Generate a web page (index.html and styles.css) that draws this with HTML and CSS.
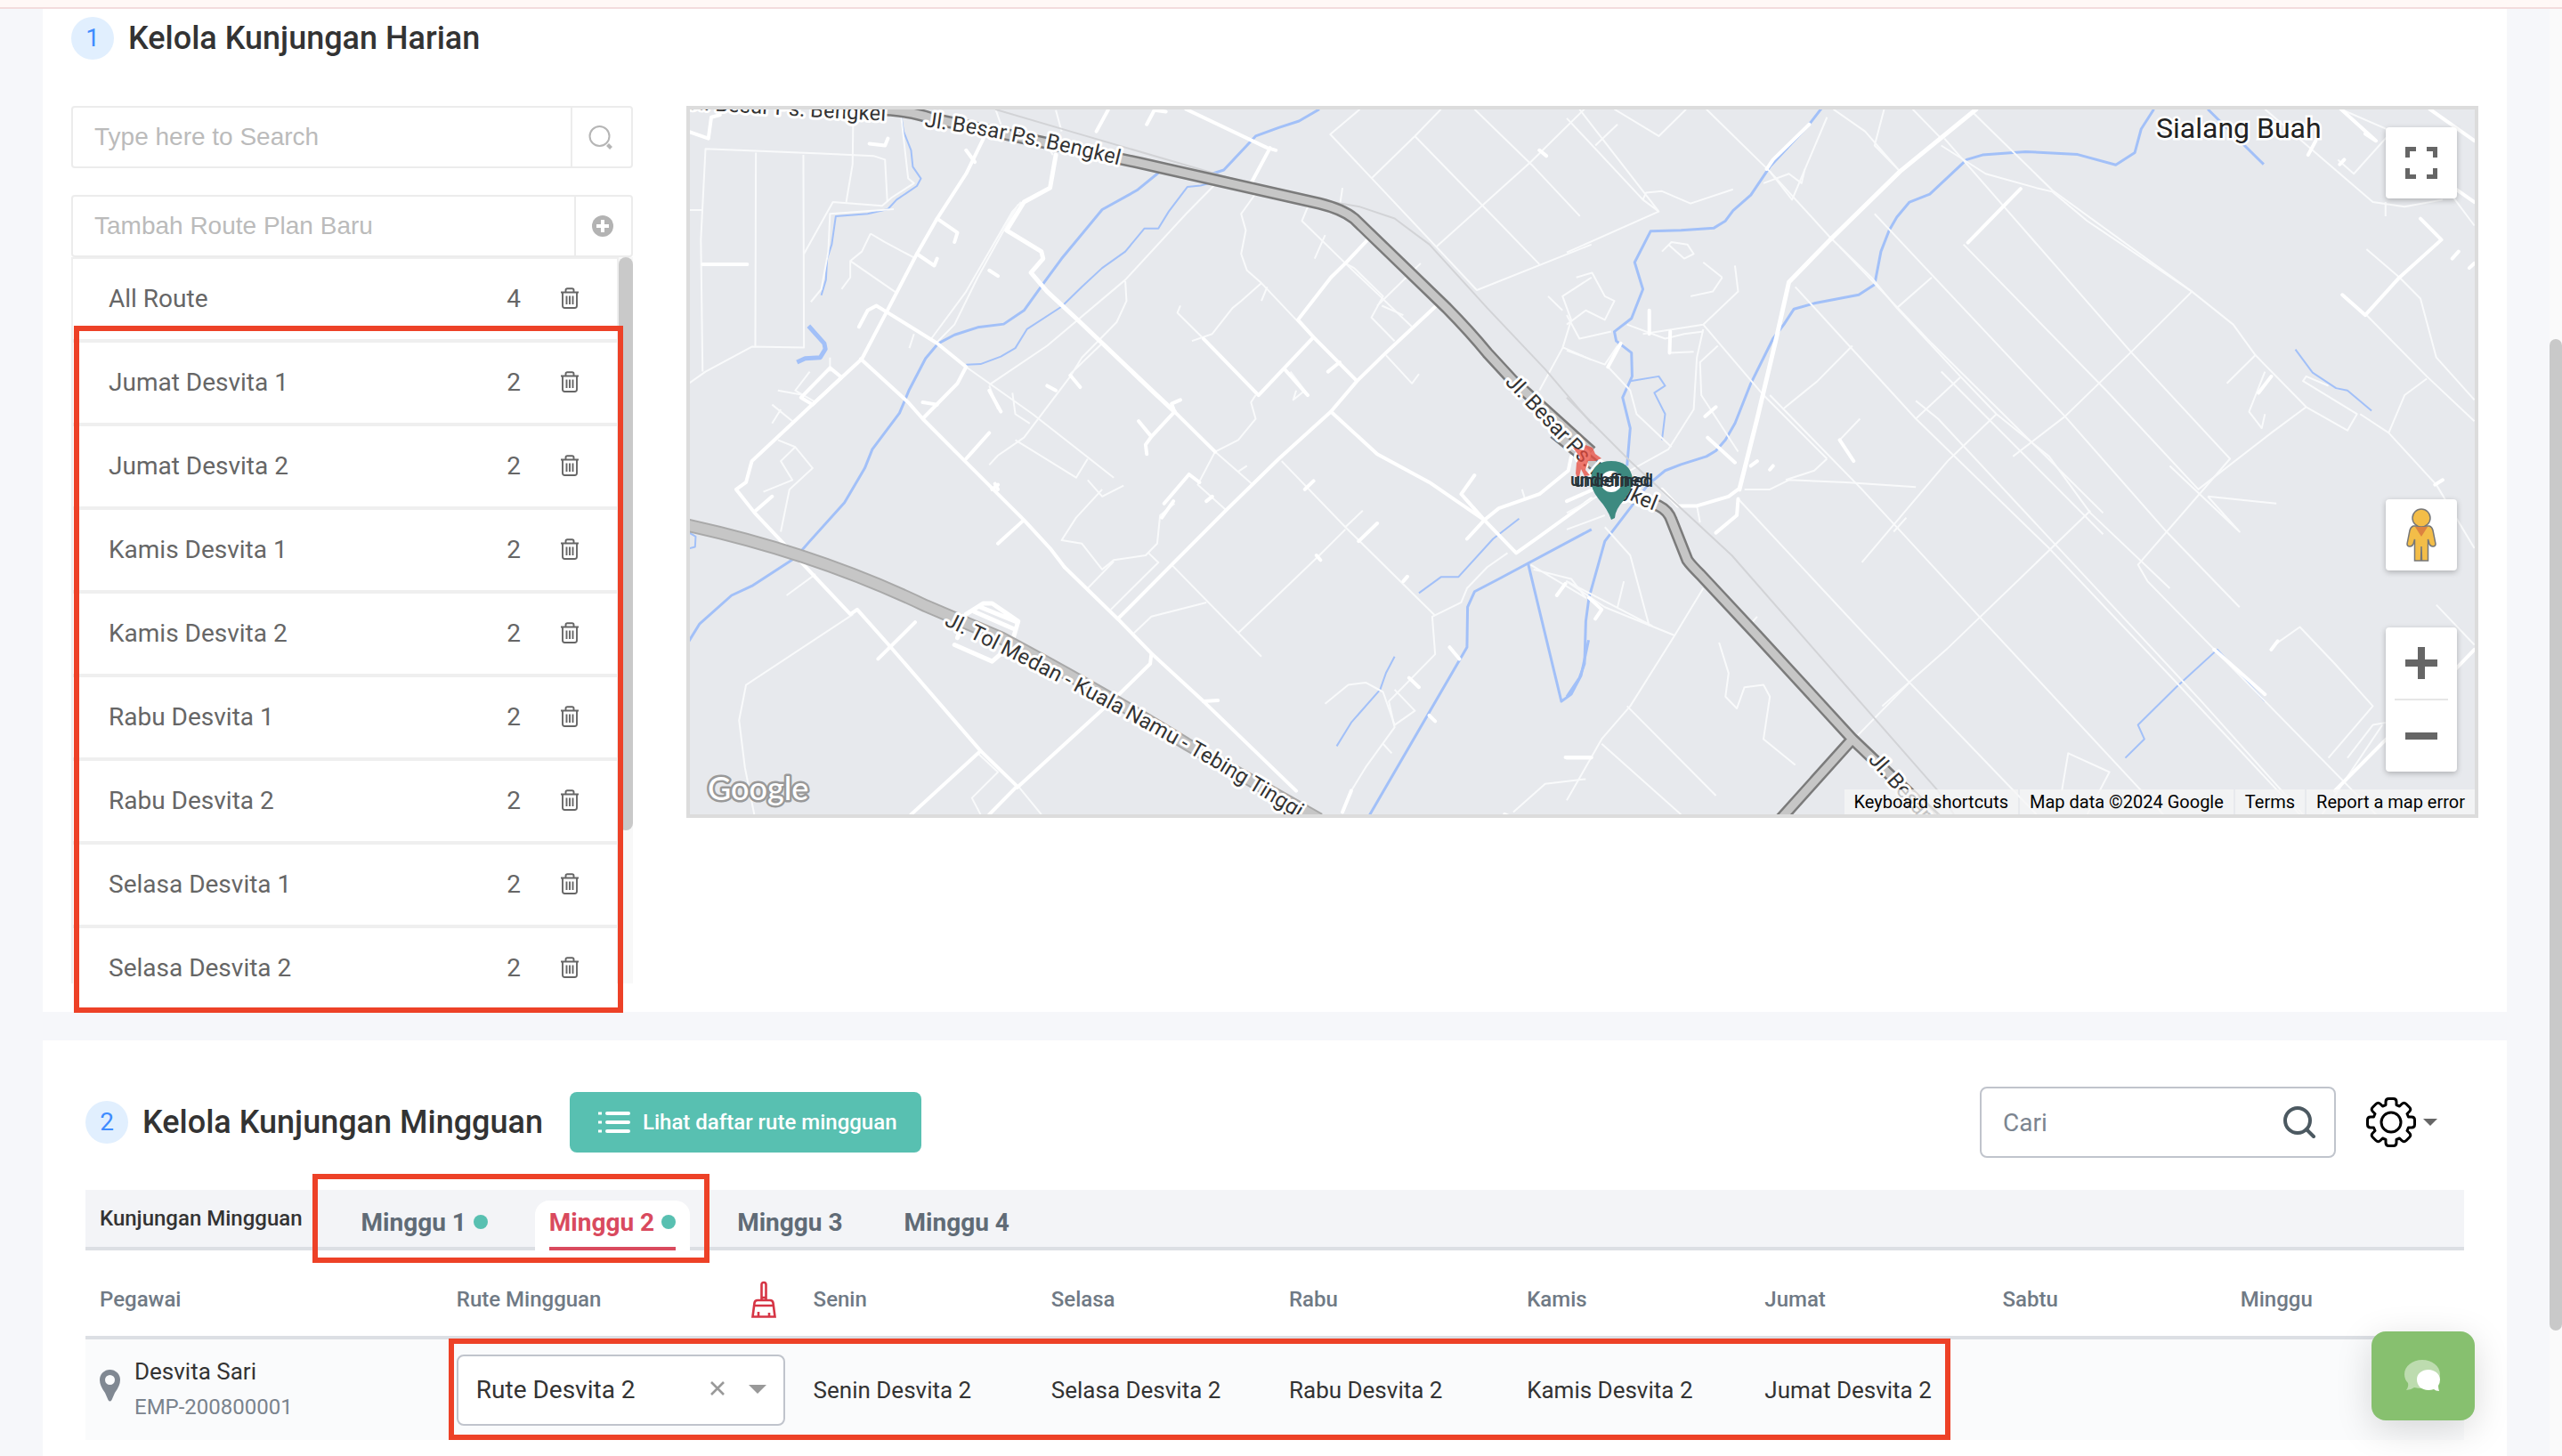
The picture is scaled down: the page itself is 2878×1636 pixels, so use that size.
FILE: index.html
```html
<!DOCTYPE html>
<html lang="id">
<head>
    <meta charset="UTF-8">
    <meta name="viewport" content="width=device-width, initial-scale=1.0">
    <title>Kelola Kunjungan</title>
    <link rel="stylesheet" href="styles.css">
</head>
<body>
    <!-- icons used more than once -->
    <svg class="sprite" aria-hidden="true">
        <symbol id="icon-trash" viewBox="0 0 22 24">
            <path d="M1 5.500h20M6.500 5V3q0-1.800 1.800-1.800h5.400q1.800 0 1.800 1.800v2M3 6v14.500q0 2.500 2.500 2.500h11q2.500 0 2.500-2.500V6M7.500 9.500v9.500M11 9.500v9.500M14.500 9.500v9.500" fill="none" stroke="#666" stroke-width="1.900"/>
        </symbol>
    </svg>

    <div class="notice"></div>

    <section class="card daily">
        <div class="card-title">
            <span class="step">1</span>
            <h2>Kelola Kunjungan Harian</h2>
        </div>
        <div class="daily-body">
            <div class="routes">
                <div class="field">
                    <input type="text" placeholder="Type here to Search" aria-label="Type here to Search">
                    <button type="button" class="field-btn" aria-label="Search">
                        <svg width="28" height="28" viewBox="0 0 28 28"><circle cx="12.500" cy="13" r="11" fill="none" stroke="#b5b5b5" stroke-width="2"/><path d="M21.500 22.500l4 4" stroke="#b5b5b5" stroke-width="4"/></svg>
                    </button>
                </div>
                <div class="field field-add">
                    <input type="text" placeholder="Tambah Route Plan Baru" aria-label="Tambah Route Plan Baru">
                    <button type="button" class="field-btn" aria-label="Tambah">
                        <svg width="24" height="24" viewBox="0 0 24 24"><circle cx="12" cy="12" r="12" fill="#b3b3b3"/><path d="M12 5v14M5 12h14" stroke="#fff" stroke-width="4"/></svg>
                    </button>
                </div>
                <div class="route-box">
                    <ul class="route-list">
                        <li><span class="name">All Route</span><span>4</span><button type="button" aria-label="Hapus"><svg width="22" height="24"><use href="#icon-trash"/></svg></button></li>
                        <li><span class="name">Jumat Desvita 1</span><span>2</span><button type="button" aria-label="Hapus"><svg width="22" height="24"><use href="#icon-trash"/></svg></button></li>
                        <li><span class="name">Jumat Desvita 2</span><span>2</span><button type="button" aria-label="Hapus"><svg width="22" height="24"><use href="#icon-trash"/></svg></button></li>
                        <li><span class="name">Kamis Desvita 1</span><span>2</span><button type="button" aria-label="Hapus"><svg width="22" height="24"><use href="#icon-trash"/></svg></button></li>
                        <li><span class="name">Kamis Desvita 2</span><span>2</span><button type="button" aria-label="Hapus"><svg width="22" height="24"><use href="#icon-trash"/></svg></button></li>
                        <li><span class="name">Rabu Desvita 1</span><span>2</span><button type="button" aria-label="Hapus"><svg width="22" height="24"><use href="#icon-trash"/></svg></button></li>
                        <li><span class="name">Rabu Desvita 2</span><span>2</span><button type="button" aria-label="Hapus"><svg width="22" height="24"><use href="#icon-trash"/></svg></button></li>
                        <li><span class="name">Selasa Desvita 1</span><span>2</span><button type="button" aria-label="Hapus"><svg width="22" height="24"><use href="#icon-trash"/></svg></button></li>
                        <li><span class="name">Selasa Desvita 2</span><span>2</span><button type="button" aria-label="Hapus"><svg width="22" height="24"><use href="#icon-trash"/></svg></button></li>
                    </ul>
                    <div class="route-scroll"><div class="route-thumb"></div></div>
                    <div class="mark mark-routes"></div>
                </div>
            </div>

            <div class="map">
                <svg class="map-canvas" viewBox="775 123 2005 792" preserveAspectRatio="xMidYMid slice">
                    <defs>
                        <path id="road-a" d="M766 122Q880 130 1000 136"/>
                        <path id="road-b" d="M1038 142Q1150 158 1275 190"/>
                        <path id="road-c" d="M1690 430L1790 535Q1825 565 1885 583"/>
                        <path id="road-d" d="M1060 702Q1230 785 1370 866L1500 945"/>
                        <path id="road-e" d="M2098 854L2190 958"/>
                    </defs>

                    <!-- west half -->
                    <g class="lines" transform="translate(760 100) scale(.6505 .5293)">
                        <g class="river">
                            <path d="M20 1175L40 1135L95 1075L130 1055L205 995L230 960L290 878L325 805L338 765L385 688L402 638L430 572L452 540L480 522L520 506L565 499L600 470L635 410L665 360L735 256L795 215L832 178"/>
                            <path d="M925 180L945 172L1000 100L1040 82L1075 68L1110 43"/>
                            <path d="M1470 1005L1528 1300L1545 1285L1562 1245L1575 1170"/>
                            <path d="M1195 1545L1365 1185L1366 1100L1378 1067L1420 1040L1580 935"/>
                        </g>
                        <g class="river thin">
                            <path d="M388 58L392 90L405 130L408 165L422 190L415 206L380 235L365 255L330 265L275 270L268 330L260 360L258 405L250 438"/>
                            <path d="M500 585L525 584L560 568L585 550L605 510L665 462L700 420L735 380L775 345L808 296L832 296L850 260L882 208L905 205L935 195"/>
                            <path d="M1282 1070L1320 1036L1350 1036L1410 955L1455 912M1240 1205L1225 1240L1215 1275L1165 1345L1140 1395M22 942L33 950L32 972L20 976"/>
                        </g>
                        <path class="pond" d="M228 503L255 540L257 552L248 570L222 572L208 580"/>
                        <g class="street">
                            <path d="M45 600L42 320L50 127L250 137L340 142L360 150L364 240M20 626L50 600L130 547L220 549L219 140M137 135L136 545M22 257L43 257"/>
                            <path d="M305 60L304 160L293 240M388 60L400 190L410 200L372 230L355 248L270 240L220 350M232 452L250 425L262 345L265 265L375 255"/>
                            <path d="M335 307L320 345L300 365L300 400L285 425M335 307L360 325L410 358M300 365L380 433"/>
                            <path d="M595 240L580 260L500 430L440 530M590 245L520 400L480 500L448 540"/>
                            <path d="M928 205L880 265L775 405L640 545L540 628M775 408L777 450L760 495L700 570L680 610L600 740L555 778L540 798M735 540L680 605"/>
                            <path d="M550 40L560 75M655 45L665 90M650 140L640 120M1000 222L975 265L983 300L975 350L985 385L1010 412L1070 490L1100 527"/>
                            <path d="M1010 412L975 450L960 465L925 520L890 535M870 460L865 475L910 530M1010 450L1020 420M1150 210L1145 250M1090 250L1080 280L1155 370L1215 440L1270 505M1120 310L1102 360"/>
                            <path d="M1155 370L1170 380L1220 440L1200 485L1240 535M1285 370L1210 460M1218 460L1255 480M1225 565L1270 625L1282 605"/>
                            <path d="M500 590L615 690L755 825M540 630L555 680M580 645L585 690L610 710M585 745L690 825L710 785M710 830L735 865L772 842M735 850L690 910L665 958L700 965L735 1020L755 1000L810 990L830 965L835 905L860 880M755 1003L710 1060"/>
                            <path d="M815 985L832 1005L750 1105M1000 650L992 665L1000 700L970 745L930 770L900 840L950 895M930 770L995 840M985 800L970 812"/>
                            <path d="M1045 790L1155 930L1310 1118M1155 930L1185 895M1155 935L1110 990L970 1155M855 1010L1010 1205M915 1090L820 1120L790 1155"/>
                            <path d="M175 745L205 760L235 805L195 850L180 940M205 760L180 790L200 830L150 855M240 1030L190 1075M305 1115L120 1265L108 1340L118 1440L135 1545"/>
                            <path d="M520 1410L555 1450L510 1505L525 1540M590 1480L630 1540M1165 1490L1190 1440L1240 1355L1230 1300L1310 1200L1305 1120L1355 1090L1365 1060L1400 1015L1435 985"/>
                            <path d="M1120 1305L1160 1265L1190 1260L1220 1280L1240 1350L1275 1320L1240 1275M1220 1390L1235 1410M1445 1535L1500 1475L1570 1465"/>
                            <path d="M1130 95L1180 43M1128 95L1312 335L1382 427L1580 330M1200 190L1275 100L1320 43M1275 100L1390 245L1490 372M1378 43L1480 165L1560 270M1570 40L1475 155L1312 335"/>
                            <path d="M1580 400L1530 440L1545 490L1530 550L1490 640M1505 440L1530 470M1530 548L1580 575M1475 1010L1570 1080L1545 1040L1480 1020M1460 850L1465 870L1420 890"/>
                            <path d="M165 670L200 705M180 680L165 710M175 640L220 650M230 600L205 640L240 665M410 520L402 550M265 570L265 600M1060 600L1085 640L1065 660L1070 640"/>
                        </g>
                        <g class="street wide">
                            <path d="M530 105L500 180L450 275L415 350L362 475L320 573L230 675L130 790L120 835L103 850L135 900L300 1115L312 1105L370 1185L525 1405L588 1480L540 1540"/>
                            <path d="M315 505L330 470L345 460L365 475L450 540L500 590L485 625L425 700M318 573L400 665L425 700L498 790L600 915L645 975L670 1015"/>
                            <path d="M405 1540L525 1405M588 1483L760 1290L818 1220L820 1198L762 1125L670 1015M820 1198L910 1300L1070 1490"/>
                            <path d="M762 1125L855 1010L950 893L1040 785L1130 685L1175 620L1225 560L1312 460M1195 318L1155 370L1130 400L1073 490L1100 527L1175 620M1100 527L1005 650L910 530"/>
                            <path d="M1130 685L1210 775L1300 835L1395 915L1450 985L1490 950L1580 870M1395 915L1420 890L1490 860L1540 810L1545 780"/>
                            <path d="M1178 960L1210 922M845 48L825 45L812 75M745 45L725 90M880 43L1020 125L1035 130M1025 125L990 205M540 385L555 397M450 275L485 305L480 325M415 350L445 375L450 360M20 90L55 105L60 60L75 55"/>
                            <path d="M500 785L540 730M555 965L598 917M348 1210L412 1132M135 897L165 865M798 705L820 738L860 685L930 770M820 738L810 755L812 775M860 685L855 668L870 660M550 838L555 850M842 880L885 818L903 835M858 875L838 910M1050 595L1090 650"/>
                            <path d="M215 655L265 592L285 612L235 670L215 655M333 116L360 120L365 105M1365 955L1395 915L1355 860L1378 820M1430 1540L1440 1545M1145 580L1125 600M45 372L122 372M500 130L515 155M1165 1490L1150 1535M1335 1185L1352 1210M1265 1250L1282 1270"/>
                            <path d="M680 608L697 633M540 640L560 685M640 630L655 640M425 665L450 670M545 850L555 840M1085 850L1100 832M1105 990L1112 1000M1255 1045L1262 1035M910 1300L935 1298M915 875L925 865M1490 130L1502 142M1300 1330L1310 1342M1535 1419L1580 1419M1520 1075L1535 1050"/>
                            <path class="big" d="M655 140L645 210L600 240L570 300L630 345L633 360L612 390L640 430L697 495L825 645L860 685"/>
                            <path class="big" d="M485 1165L500 1115L530 1092L545 1092L590 1130L578 1180L545 1215L480 1180M515 1110L580 1145M525 1100L585 1130"/>
                        </g>
                        <path class="rail" d="M550 43L680 90L945 185L1060 225L1180 250L1240 275L1300 330L1400 465L1500 595L1580 710"/>
                        <path class="road-edge" d="M340 43Q400 45 440 62L640 115L800 157L1110 243Q1150 255 1170 275L1330 465Q1370 515 1400 560L1445 620L1580 770"/>
                        <path class="road-fill" d="M340 43Q400 45 440 62L640 115L800 157L1110 243Q1150 255 1170 275L1330 465Q1370 515 1400 560L1445 620L1580 770"/>
                        <path class="toll-edge" d="M15 925Q240 985 430 1097L560 1165Q750 1290 880 1390L1110 1550"/>
                        <path class="toll-fill" d="M15 925Q240 985 430 1097L560 1165Q750 1290 880 1390L1110 1550"/>
                    </g>

                    <!-- east half -->
                    <g class="lines" transform="translate(1760 100) scale(.713 .5293)">
                        <g class="river">
                            <path d="M925 43L905 85L895 135L865 161L805 139L723 133L655 140L630 150L572 223L540 240L520 272L508 300L495 345L485 415L460 437L390 455L358 467L342 500L325 530L290 625L265 710L250 745L235 768L220 780L180 797L155 810L128 840L60 960L35 1080L30 1130L28 1220L20 1250L0 1290"/>
                            <path d="M402 40L382 75L320 165L290 225L262 258L250 280L232 295L180 300L132 302L107 368L120 425L102 487L75 515L78 535L102 560L103 610L88 655L100 720L95 800M1010 43L1098 160"/>
                        </g>
                        <g class="river thin">
                            <path d="M100 620L145 610L155 630L138 645L155 690L150 745M1148 553L1175 602L1212 635L1230 640L1268 683M880 1420L910 1380L900 1350L960 1270L1025 1190L1100 1300"/>
                        </g>
                        <g class="street">
                            <path d="M0 347L145 260L120 235L125 220L150 217L195 243L262 213M120 235L0 62M20 43L145 260M80 75L45 120M75 43L145 100L188 43"/>
                            <path d="M220 43L320 175L415 315L480 400L520 465L620 610L677 690L760 780L825 900L950 1060"/>
                            <path d="M410 60L355 235L320 175M420 43L470 90L525 175L485 120L500 43M545 43L590 105"/>
                            <path d="M640 50L765 215L985 430L1050 500L1085 565L1165 675L1230 725L1245 690L1160 620L1165 610L1200 630"/>
                            <path d="M590 120L660 180L740 210L765 218L820 280L985 430L888 560L785 695L703 780M825 895L598 1190L497 1310"/>
                            <path d="M595 105L890 560L1045 785L900 1010L915 1045L1275 1540M485 265L785 695L945 940L1060 1100"/>
                            <path d="M430 335L575 540L845 900M575 400L520 465M590 600L845 945M450 545L395 620L340 680M620 612L550 700M677 690L600 790L465 1005"/>
                            <path d="M360 420L550 700L760 975L950 1245L1155 1540M550 662L585 700L1000 1300L1160 1540M320 650L465 850L650 1120L940 1540M215 500L310 650L410 785"/>
                            <path d="M270 870L540 1260L740 1540M205 885L210 920M535 910L515 940M540 1260L380 1480L340 1540"/>
                            <path d="M625 330L850 640L995 850L1110 730L1165 675M1040 625L1085 565M1010 865L1060 940L950 800M1010 865L1118 880"/>
                            <path d="M265 375L270 430L215 500L120 520M195 440L230 430L245 400M215 510L205 570L200 680L160 765L100 810M238 545L210 580L212 650L270 770"/>
                            <path d="M95 500L155 530L185 520L215 515M163 515L162 560L200 558M65 590L100 640L110 690L165 760M0 555L60 585L80 545M0 480L20 530L70 515M15 400L40 390L60 440L75 450L60 490L30 470L0 500"/>
                            <path d="M150 345L165 325L190 330L200 350L185 360L160 330M215 368L245 400M310 200L350 180L370 200L375 170"/>
                            <path d="M215 1060L170 1160L100 1310L55 1380L0 1510M95 1310L235 1500M55 1390L180 1540M130 1140L100 990L60 930M135 1140L0 1045L60 1100L170 1160M90 1045L80 1100M240 1175L255 1240L250 1290L268 1315L280 1270L310 1265L320 1290L310 1380L360 1435M300 1120L290 1135"/>
                            <path d="M1220 43L1300 90L1240 180L1215 150M1100 43L1270 240L1320 250L1380 235M1290 270L1290 240M1380 200L1430 290M1260 340L1312 400L1345 445L1370 570L1430 660M1260 480L1355 610L1430 705M1355 615L1320 650L1295 730L1250 690M1295 730L1370 840L1430 975"/>
                            <path d="M1370 1095L1430 1180M1115 1180L1155 1142L1210 1220L1270 1310L1200 1420M1290 1345L1270 1350L1230 1420M1285 1350L1190 1540M780 1490L790 1410L855 1450L820 1540"/>
                            <path d="M0 900L110 820M0 935L60 905M280 850L320 850L350 830L440 835L550 845M410 785L390 810L345 830M430 745L462 700"/>
                            <path d="M1100 690L1095 720L1075 685L1100 600M1220 435L1235 455"/>
                        </g>
                        <g class="street wide">
                            <path d="M382 75L325 150L315 170M715 212L632 326M1430 1190L1380 1260L1210 1490M1430 240L1345 160M1378 320L1312 400L1258 480L1222 437M1378 320L1345 275M1220 43L1275 110L1258 95M1360 43L1430 110M1180 110L1168 140"/>
                            <path d="M270 850L255 865L205 885L175 885L150 850M270 870L268 905L235 942M222 740L265 793M163 515L162 560M130 470L130 520M85 540L65 590M235 675L218 695M430 745L452 790M1020 1190L1100 1285M1110 610L1090 645M1110 1190L1120 1172M1380 830L1368 840M0 875L50 845M0 1420L38 1420M35 1080L55 1105L45 1125M1405 345L1395 360M1430 370L1422 380M1225 150L1218 160M300 790L290 800M325 800L320 808"/>
                            <path class="big" d="M645 43L525 175L415 320L350 410L330 530L300 700L272 850"/>
                        </g>
                        <path class="rail" d="M0 655L100 790L260 990L585 1490L610 1540"/>
                        <path class="road-edge" d="M-20 730L110 870L145 885Q160 895 165 915L190 1000Q195 1010 210 1030L300 1160L450 1380L590 1560M450 1380L330 1560"/>
                        <path class="road-fill" d="M-20 730L110 870L145 885Q160 895 165 915L190 1000Q195 1010 210 1030L300 1160L450 1380L590 1560M450 1380L330 1560"/>
                    </g>

                    <g class="road-label">
                        <text><textPath href="#road-a" startOffset="6">Jl. Besar Ps. Bengkel</textPath></text>
                        <text><textPath href="#road-b">Jl. Besar Ps. Bengkel</textPath></text>
                        <text><textPath href="#road-c">Jl. Besar Ps. Bengkel</textPath></text>
                        <text><textPath href="#road-d">Jl. Tol Medan - Kuala Namu - Tebing Tinggi</textPath></text>
                        <text><textPath href="#road-e">Jl. Besar Ps.</textPath></text>
                    </g>
                    <text class="town" x="2422" y="155">Sialang Buah</text>

                    <!-- visit markers -->
                    <path d="M1767 503L1779 506L1781 500L1789 503L1792 510L1799 515L1792 518L1784 518L1781 528L1786 534L1780 535L1776 527L1773 540L1770 532L1771 520L1775 514Z" fill="#e84a3c" fill-opacity=".75"/>
                    <path d="M1810 584Q1806 572 1796 561Q1787 550 1787 538Q1789 518 1810 518Q1831 518 1834 538Q1834 550 1825 561Q1814 573 1814 582Z" fill="#3d8a80"/>
                    <circle cx="1810" cy="541" r="12" fill="#fff"/>
                    <g class="pin-label">
                        <text x="1764" y="546">undefined</text>
                        <text x="1768" y="547">undefined</text>
                    </g>
                    <text class="google" x="795" y="899">Google</text>
                </svg>

                <div class="map-controls">
                    <button type="button" aria-label="Toggle fullscreen view">
                        <svg width="36" height="36" viewBox="0 0 36 36"><path d="M2.500 12V2.500H12M24 2.500h9.500V12M33.500 24v9.500H24M12 33.500H2.500V24" fill="none" stroke="#666" stroke-width="5"/></svg>
                    </button>
                    <button type="button" class="pegman" aria-label="Street View Pegman">
                        <svg width="34" height="60" viewBox="0 0 34 60"><g fill="#f3bd48" stroke="#777" stroke-width="1.500"><path d="M8 20h18q3 1 4 5l3 15q0 3-3 3t-4-3l-1.500-5V59h-7l-.5-16-.5 16h-7V35L8 40q-1 3-4 3t-3-3l3-15q1-4 4-5z"/><circle cx="17" cy="11" r="10"/></g><path d="M10 21h14l-7 11z" fill="#dc8240"/></svg>
                    </button>
                    <div class="zoom">
                        <button type="button" aria-label="Zoom in"><svg width="36" height="36" viewBox="0 0 36 36"><path d="M18 0v36M0 18h36" stroke="#666" stroke-width="8"/></svg></button>
                        <button type="button" aria-label="Zoom out"><svg width="36" height="36" viewBox="0 0 36 36"><path d="M0 18h36" stroke="#666" stroke-width="8"/></svg></button>
                    </div>
                </div>
                <div class="map-footer">
                    <button type="button">Keyboard shortcuts</button>
                    <span>Map data ©2024 Google</span>
                    <a href="#">Terms</a>
                    <a href="#">Report a map error</a>
                </div>
            </div>
        </div>
    </section>

    <section class="card weekly">
        <div class="weekly-head">
            <div class="card-title">
                <span class="step">2</span>
                <h2>Kelola Kunjungan Mingguan</h2>
            </div>
            <button type="button" class="btn-list">
                <svg width="36" height="26" viewBox="0 0 36 26"><path d="M10 3h24M10 13h24M10 23h24" stroke="#fff" stroke-width="4" stroke-linecap="round"/><path d="M0 3h4M0 13h4M0 23h4" stroke="#fff" stroke-width="3"/></svg>
                Lihat daftar rute mingguan
            </button>
            <div class="cari">
                <input type="text" placeholder="Cari" aria-label="Cari">
                <svg width="38" height="38" viewBox="0 0 38 38"><circle cx="17" cy="17" r="14" fill="none" stroke="#4c5961" stroke-width="4"/><path d="M27 27l8 8" stroke="#4c5961" stroke-width="4" stroke-linecap="round"/></svg>
            </div>
            <button type="button" class="settings" aria-label="Pengaturan">
                <svg width="56" height="56" viewBox="-28 -28 56 56"><g fill="none" stroke="#000" stroke-width="3" stroke-linejoin="round"><path d="M-6-19.500V-23Q-6-26.500-2.500-26.500H2.500Q6-26.500 6-23V-19.500L9.500-18 12-20.500Q14.500-23 17-20.500L20.500-17Q23-14.500 20.500-12L18-9.500 19.500-6H23Q26.500-6 26.500-2.500V2.500Q26.500 6 23 6H19.500L18 9.500 20.500 12Q23 14.500 20.500 17L17 20.500Q14.500 23 12 20.500L9.500 18 6 19.500V23Q6 26.500 2.500 26.500H-2.500Q-6 26.500-6 23V19.500L-9.500 18-12 20.500Q-14.500 23-17 20.500L-20.500 17Q-23 14.500-20.500 12L-18 9.500-19.500 6H-23Q-26.500 6-26.500 2.500V-2.500Q-26.500-6-23-6H-19.500L-18-9.500-20.500-12Q-23-14.500-20.500-17L-17-20.500Q-14.500-23-12-20.500L-9.500-18Z"/><circle r="11"/></g></svg>
                <span class="caret"></span>
            </button>
        </div>

        <div class="tabs">
            <span class="tabs-label">Kunjungan Mingguan</span>
            <div class="tab-group">
                <button type="button" class="tab">Minggu 1<i class="dot"></i></button>
                <button type="button" class="tab active">Minggu 2<i class="dot"></i></button>
                <div class="mark mark-tabs"></div>
            </div>
            <button type="button" class="tab">Minggu 3</button>
            <button type="button" class="tab">Minggu 4</button>
        </div>

        <div class="table-wrap">
            <table>
                <thead>
                    <tr>
                        <th class="wide">Pegawai</th>
                        <th class="wide">
                            <div class="rute-head">
                                Rute Mingguan
                                <button type="button" aria-label="Bersihkan">
                                    <svg width="28" height="42" viewBox="0 0 28 42"><path d="M11.500 22V4.500Q11.500 2 14 2t2.500 2.500V22M7 22h14q3 0 3.500 3L26.500 40.500h-25L3.500 25q.5-3 3.500-3zM4 28h20M8 35v5M20 36v4M11.500 19h5" fill="none" stroke="#d63545" stroke-width="2.600"/></svg>
                                </button>
                            </div>
                        </th>
                        <th>Senin</th>
                        <th>Selasa</th>
                        <th>Rabu</th>
                        <th>Kamis</th>
                        <th>Jumat</th>
                        <th>Sabtu</th>
                        <th>Minggu</th>
                    </tr>
                </thead>
                <tbody>
                    <tr>
                        <td>
                            <div class="employee">
                                <svg width="23" height="36" viewBox="0 0 23 36"><path d="M11.500 0A11.500 11.500 0 0 1 23 11.500Q23 18 17 26L13.500 34q-2 3-4 0L6 26Q0 18 0 11.500A11.500 11.500 0 0 1 11.500 0zM11.500 6a5.500 5.500 0 1 0 0 11 5.500 5.500 0 0 0 0-11z" fill="#808892" fill-rule="evenodd"/></svg>
                                <div>
                                    <div>Desvita Sari</div>
                                    <div class="emp-id">EMP-200800001</div>
                                </div>
                            </div>
                        </td>
                        <td>
                            <div class="rute-select">
                                <select aria-label="Rute Mingguan">
                                    <option>Rute Desvita 2</option>
                                    <option>Rute Desvita 1</option>
                                </select>
                                <button type="button" class="clear" aria-label="Hapus pilihan">
                                    <svg width="16" height="16" viewBox="0 0 16 16"><path d="M1 1l14 14M15 1L1 15" stroke="#999" stroke-width="2.600"/></svg>
                                </button>
                                <span class="caret"></span>
                            </div>
                        </td>
                        <td>Senin Desvita 2</td>
                        <td>Selasa Desvita 2</td>
                        <td>Rabu Desvita 2</td>
                        <td>Kamis Desvita 2</td>
                        <td>Jumat Desvita 2</td>
                        <td></td>
                        <td></td>
                    </tr>
                </tbody>
            </table>
            <div class="mark mark-row"></div>
        </div>
    </section>

    <button type="button" class="chat" aria-label="Chat">
        <svg width="42" height="36" viewBox="0 0 42 36"><path d="M20 0c11 0 20 7 20 16s-9 16-20 16q-5 0-9-1-4 3-9 3 3-4 2-8-4-4-4-10C0 7 9 0 20 0z" fill="#bddcaf"/><path d="M27 11c7 0 13 5 13 11q0 4-2 7 0 3 1 6-4 0-6-2-3 1-6 1c-8 0-13-5-13-12s6-11 13-11z" fill="#fff"/></svg>
    </button>
    <div class="page-scroll"><div class="page-thumb"></div></div>
</body>
</html>
```

FILE: styles.css
```css
* {
    box-sizing: border-box;
}
body {
    margin: 0;
    min-height: 100vh;
    display: flex;
    flex-direction: column;
    overflow: hidden;
    background: #f6f7fa;
    color: #333;
    font-family: Roboto, "Liberation Sans", sans-serif;
    font-size: 26px;
}
button, input, select {
    font-family: inherit;
    font-size: inherit;
    color: inherit;
}
button {
    display: flex;
    align-items: center;
    justify-content: center;
    padding: 0;
    border: none;
    background: none;
    cursor: pointer;
}
svg {
    display: block;
    flex: none;
}
.sprite {
    display: none;
}
.notice {
    height: 10px;
    background: #fff8f6;
    border-bottom: 2px solid #f3dcdd;
}

/* cards */
.card {
    margin: 0 62px 0 48px;
    background: #fff;
}
.card-title {
    display: flex;
    align-items: center;
    gap: 16px;
}
.card-title h2 {
    margin: 0;
    font-size: 36px;
    font-weight: 500;
    line-height: 48px;
}
.step {
    width: 48px;
    height: 48px;
    border-radius: 50%;
    background: #e1effe;
    color: #3f8cff;
    font-size: 28px;
    line-height: 48px;
    text-align: center;
}
.mark {
    position: absolute;
    border: 6px solid #ed4127;
    pointer-events: none;
}
.caret {
    border: solid transparent;
    border-width: 10px 10px 0;
    border-top-color: #999;
}

/* daily routes */
.daily {
    padding: 9px 32px 32px;
}
.daily-body {
    display: flex;
    align-items: flex-start;
    gap: 60px;
    margin-top: 52px;
}
.routes {
    flex: 0 0 631px;
}
.field {
    display: flex;
    height: 70px;
    border: 2px solid #ececec;
    border-radius: 4px;
}
.field-add {
    margin-top: 30px;
}
.field input {
    flex: 1;
    min-width: 0;
    padding: 0 24px;
    border: none;
    background: none;
    font-family: "Liberation Sans", Arial, sans-serif;
    font-size: 28px;
}
.field input::placeholder {
    color: #bbb;
}
.field-btn {
    width: 68px;
    padding-right: 2px;
    border-left: 2px solid #ececec;
}
.field-add .field-btn {
    width: 64px;
}
.route-box {
    position: relative;
    display: flex;
    height: 816px;
}
.route-list {
    flex: 1;
    margin: 0;
    padding: 0;
    overflow: hidden;
    list-style: none;
    border: solid #efefef;
    border-width: 2px 2px 0;
}
.route-list li {
    display: flex;
    align-items: center;
    height: 94px;
    padding: 0 42px 2px 40px;
    border-bottom: 4px solid #efefef;
    color: #666;
    font-size: 28px;
}
.route-list .name {
    flex: 1;
}
.route-list button {
    margin-left: 44px;
}
.route-scroll {
    width: 16px;
    background: #f8f8f8;
}
.route-thumb {
    height: 644px;
    border-radius: 8px;
    background: #c9c9c9;
}
.mark-routes {
    top: 77px;
    left: 3px;
    right: 11px;
    bottom: -33px;
}

/* map */
.map {
    position: relative;
    flex: 1;
    height: 800px;
    border: 4px solid #dcdcdc;
    background: #e7e9ed;
    overflow: hidden;
}
.map-canvas {
    width: 100%;
    height: 100%;
}
.lines path {
    fill: none;
    vector-effect: non-scaling-stroke;
    stroke-linejoin: round;
}
.river path {
    stroke: #a2c0f8;
    stroke-width: 3px;
}
.river.thin path {
    stroke-width: 2px;
}
.lines .pond {
    stroke: #a2c0f8;
    stroke-width: 5px;
}
.street path {
    stroke: #f9fafb;
    stroke-width: 2px;
}
.street.wide path {
    stroke: #fff;
    stroke-width: 4px;
    stroke-linecap: round;
}
.street.wide .big {
    stroke-width: 5px;
}
.lines .rail {
    stroke: #d2d3d6;
    stroke-width: 2px;
}
.lines .road-edge {
    stroke: #7b7b7b;
    stroke-width: 14px;
}
.lines .road-fill {
    stroke: #c6c6c6;
    stroke-width: 9px;
}
.lines .toll-edge {
    stroke: #a9a9a9;
    stroke-width: 15px;
}
.lines .toll-fill {
    stroke: #c6c6c6;
    stroke-width: 11px;
}
.road-label text {
    fill: #333;
    stroke: #fff;
    stroke-width: 6px;
    stroke-linejoin: round;
    paint-order: stroke;
    font-size: 24px;
}
.town {
    fill: #222;
    stroke: #fff;
    stroke-width: 5px;
    paint-order: stroke;
    font-size: 32px;
}
.pin-label text {
    fill: #263238;
    font-size: 20px;
    font-weight: 500;
}
.google {
    fill: #fff;
    stroke: #999;
    stroke-width: 5px;
    stroke-linejoin: round;
    paint-order: stroke;
    font-family: Lato, sans-serif;
    font-size: 36px;
    font-weight: 500;
}
.map-controls {
    position: absolute;
    top: 20px;
    right: 20px;
    width: 80px;
}
.map-controls button {
    width: 80px;
    height: 80px;
    border-radius: 4px;
    background: #fff;
    box-shadow: 0 2px 6px rgba(0, 0, 0, .25);
}
.map-controls .pegman {
    margin-top: 338px;
}
.zoom {
    margin-top: 64px;
    padding: 0 10px;
    border-radius: 4px;
    background: #fff;
    box-shadow: 0 2px 6px rgba(0, 0, 0, .25);
}
.map-controls .zoom button {
    width: 60px;
    box-shadow: none;
    border-radius: 0;
}
.map-controls .zoom button + button {
    height: 82px;
    border-top: 2px solid #e6e6e6;
}
.map-footer {
    position: absolute;
    right: 0;
    bottom: 0;
    display: flex;
    gap: 2px;
    color: #000;
    font-size: 20px;
    line-height: 28px;
}
.map-footer > * {
    padding: 0 11px;
    background: rgba(245, 245, 245, .75);
    color: inherit;
    text-decoration: none;
}

/* weekly */
.weekly {
    flex: 1;
    margin-top: 32px;
    padding: 52px 48px 10px;
}
.weekly-head {
    display: flex;
    align-items: center;
    height: 80px;
    margin-bottom: 36px;
    padding-right: 30px;
}
.btn-list {
    gap: 14px;
    height: 68px;
    margin-left: 30px;
    padding: 0 27px 0 32px;
    border-radius: 8px;
    background: #58c0b1;
    color: #fff;
    font-size: 24px;
    font-weight: 500;
}
.cari {
    display: flex;
    align-items: center;
    width: 400px;
    height: 80px;
    margin-left: auto;
    padding-right: 20px;
    border: 2px solid #c0c4cc;
    border-radius: 8px;
}
.cari input {
    flex: 1;
    min-width: 0;
    padding: 0 24px;
    border: none;
    background: none;
    font-size: 28px;
}
.cari input::placeholder {
    color: #7c8590;
}
.settings {
    gap: 8px;
    margin-left: 34px;
}
.settings .caret {
    border-width: 8px 8px 0;
    border-top-color: #666;
}
.tabs {
    display: flex;
    align-items: flex-end;
    height: 68px;
    padding: 0 16px;
    background: #f3f4f7;
    box-shadow: inset 0 -4px #dcdfe4;
}
.tabs-label {
    margin-right: 50px;
    font-size: 24px;
    font-weight: 500;
    line-height: 64px;
    align-self: flex-start;
}
.tab-group {
    position: relative;
    display: flex;
}
.tab {
    position: relative;
    height: 56px;
    margin-right: 37px;
    padding: 0 16px 8px;
    border-radius: 16px 16px 0 0;
    color: #606b76;
    font-size: 28px;
    font-weight: 700;
}
.tab.active {
    background: #fff;
    color: #d94a5e;
}
.tab.active::after {
    content: "";
    position: absolute;
    left: 16px;
    right: 16px;
    bottom: 0;
    height: 4px;
    background: #d94a5e;
}
.dot {
    width: 16px;
    height: 16px;
    margin-left: 8px;
    border-radius: 50%;
    background: #58c0b1;
}
.mark-tabs {
    top: -30px;
    left: -39px;
    right: 15px;
    bottom: -14px;
}
.table-wrap {
    position: relative;
}
table {
    width: 100%;
    table-layout: fixed;
    border-collapse: separate;
    border-spacing: 0;
}
th {
    width: 10%;
    height: 100px;
    padding: 14px 16px 0;
    border-bottom: 4px solid #dcdfe4;
    color: #707a85;
    font-size: 24px;
    font-weight: 500;
    text-align: left;
}
th.wide {
    width: 15%;
}
td {
    height: 113px;
    padding: 0 16px;
    background: #fafbfc;
    white-space: nowrap;
}
.rute-head {
    display: flex;
    align-items: center;
    justify-content: space-between;
    padding-right: 10px;
}
.employee {
    display: flex;
    align-items: center;
    gap: 16px;
    padding-bottom: 2px;
    line-height: 40px;
}
.employee svg {
    margin-bottom: 8px;
}
.emp-id {
    color: #7a838d;
    font-size: 24px;
}
.rute-select {
    position: relative;
}
.rute-select select {
    display: block;
    width: 100%;
    height: 80px;
    padding: 0 20px;
    border: 2px solid #c0c4cc;
    border-radius: 8px;
    background: #fff;
    font-size: 28px;
    appearance: none;
}
.rute-select .clear {
    position: absolute;
    top: 30px;
    right: 68px;
}
.rute-select .caret {
    position: absolute;
    top: 34px;
    right: 21px;
    pointer-events: none;
}
.mark-row {
    top: 99px;
    left: calc(15% + 7px);
    right: calc(20% + 43px);
    bottom: 0;
}

/* floating parts */
.chat {
    position: fixed;
    right: 98px;
    bottom: 40px;
    width: 116px;
    height: 100px;
    border-radius: 16px;
    background: #87c06f;
    box-shadow: 0 10px 40px rgba(0, 0, 0, .15);
}
.page-scroll {
    position: fixed;
    top: 10px;
    right: 0;
    bottom: 0;
    width: 14px;
    background: #fafafa;
}
.page-thumb {
    height: 68.5%;
    margin-top: 371px;
    border-radius: 7px;
    background: #c9c9c9;
}
```
